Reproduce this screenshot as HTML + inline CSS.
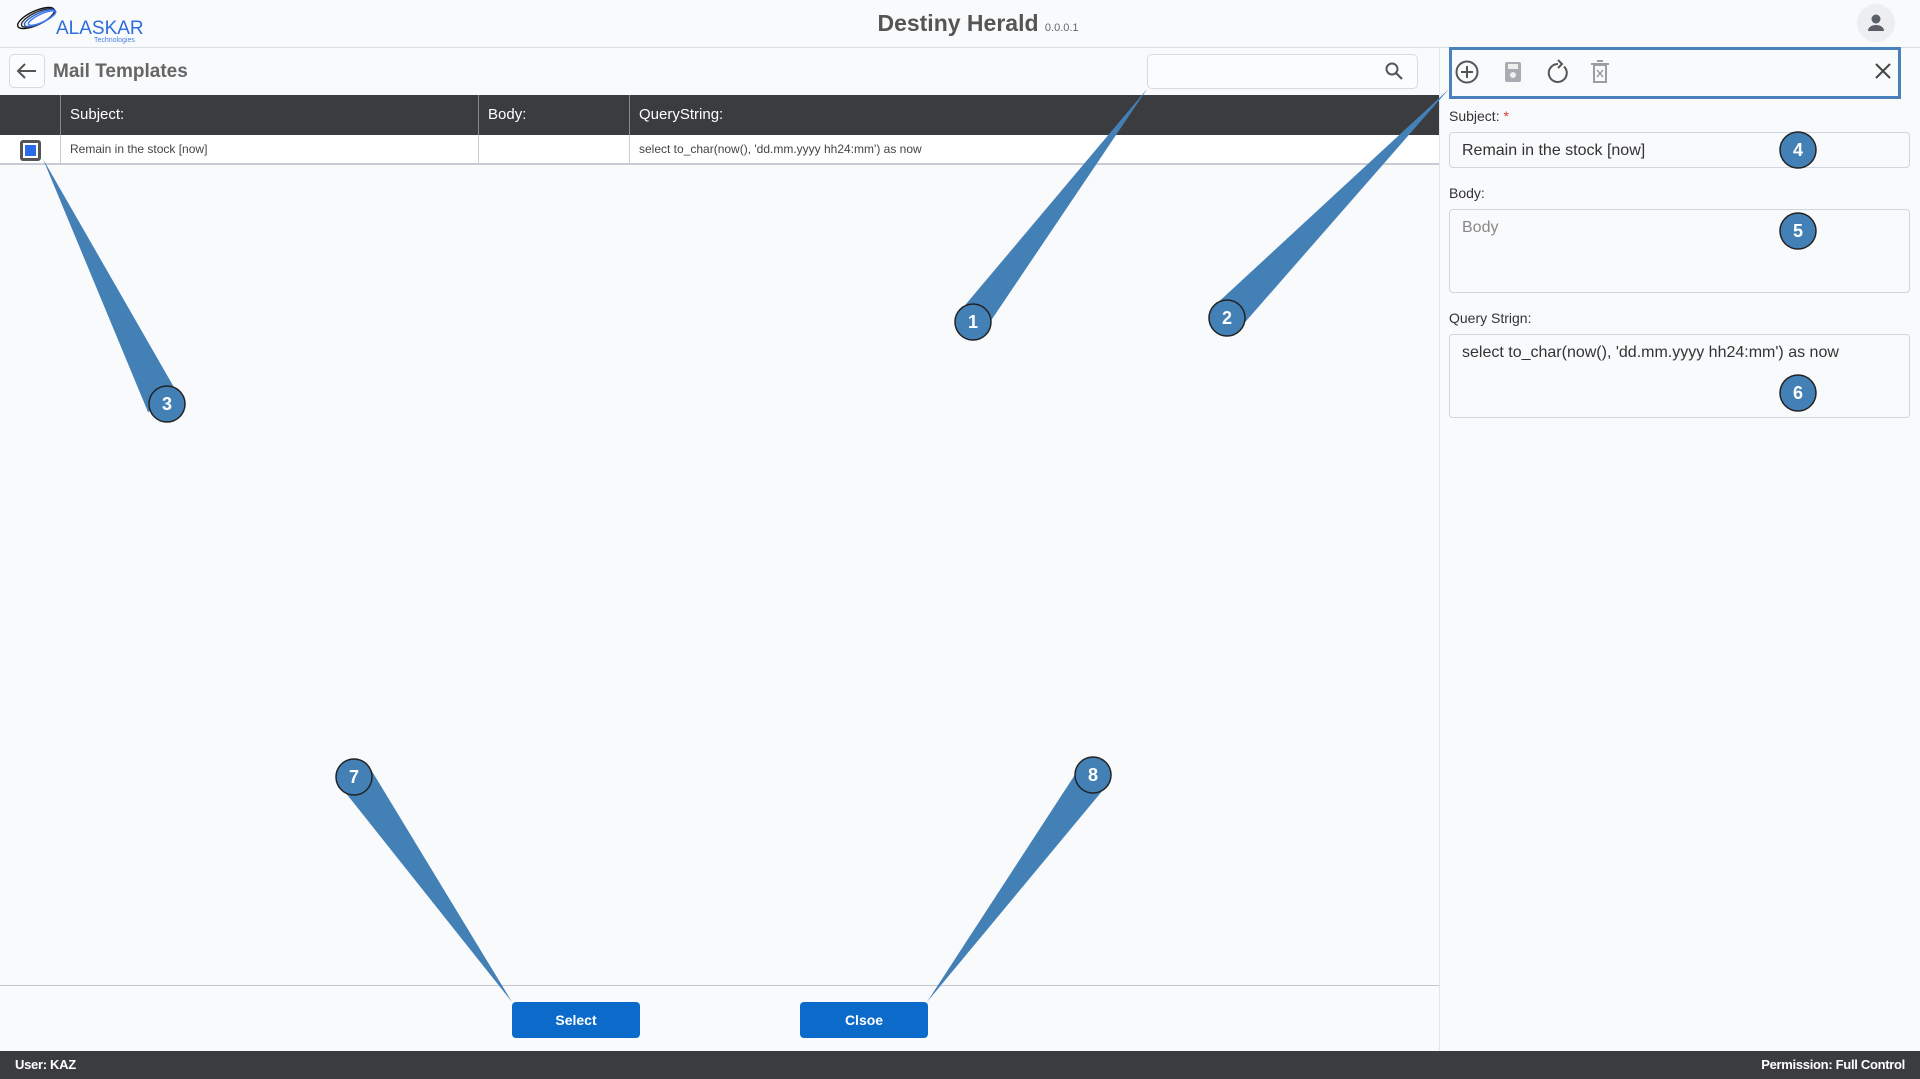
<!DOCTYPE html>
<html><head><meta charset="utf-8"><style>
*{box-sizing:border-box;margin:0;padding:0}
body{width:1920px;height:1079px;overflow:hidden;background:#f9fafc;font-family:"Liberation Sans",sans-serif;position:relative;color:#333}
.abs{position:absolute}
.hdr{left:0;top:0;width:1920px;height:48px;border-bottom:1px solid #dcdfe4;background:#f9fafc}
.title{left:18px;width:1920px;top:10px;text-align:center;font-size:23px;font-weight:bold;color:#555}
.title small{font-size:11px;font-weight:normal;color:#666}
.avatar{left:1857px;top:4px;width:38px;height:38px;border-radius:50%;background:#eceef2}
.back{left:9px;top:54px;width:36px;height:34px;border:1px solid #d6dbe2;border-radius:5px;background:#fbfcfd}
.mt{left:53px;top:61px;font-size:19px;font-weight:bold;color:#666}
.search{left:1147px;top:54px;width:271px;height:35px;border:1px solid #d6dbe2;border-radius:5px;background:#fbfcfd}
.th{left:0;top:95px;width:1439px;height:40px;background:#3b3c40;color:#fff;font-size:15px}
.th div,.tr div{position:absolute;top:0;height:100%;padding-left:9px;line-height:40px;border-left:1px solid #888}
.tr{left:0;top:135px;width:1439px;height:30px;background:#fff;border-bottom:2px solid #c8ccd2;font-size:12px;color:#444}
.tr div{line-height:29px;border-left:1px solid #ccc}
.cb{left:20px;top:140px;width:21px;height:21px;border:3px solid #555;border-radius:3px;background:#2b6be8;box-shadow:inset 0 0 0 2px #fff}
.rp{left:1439px;top:48px;width:481px;height:1003px;border-left:1px solid #e2e5ea;background:#f9fafc}
.tb{left:1449px;top:47px;width:452px;height:52px;border:3px solid #4a80bb}
.lbl{font-size:14px;color:#333}
.inp{left:1449px;width:461px;border:1px solid #d0d6de;border-radius:4px;background:#f9fafc;font-size:16px;color:#333;padding:9px 12px}
.line{left:0;top:985px;width:1439px;height:1px;background:#c4c6ca}
.btn{top:1002px;width:128px;height:36px;background:#0c6bca;border-radius:4px;color:#fff;font-weight:bold;font-size:14px;text-align:center;line-height:36px}
.ft{left:0;top:1051px;width:1920px;height:28px;background:#3b3c40;color:#fff;font-size:13px;font-weight:bold;line-height:28px;letter-spacing:-0.3px}
</style></head><body>
<div class="abs hdr"></div>
<svg class="abs" style="left:14px;top:4px" width="136" height="40" viewBox="0 0 136 40">
<g fill="none" stroke-width="1.4">
<ellipse cx="22" cy="14" rx="20" ry="7" transform="rotate(-25 22 14)" stroke="#111"/>
<ellipse cx="24" cy="14" rx="18" ry="6" transform="rotate(-25 24 14)" stroke="#333"/>
<ellipse cx="26" cy="14" rx="17" ry="5" transform="rotate(-25 26 14)" stroke="#2b5fd0"/>
<ellipse cx="28" cy="14" rx="15" ry="4" transform="rotate(-25 28 14)" stroke="#3a7af0"/>
</g>
<text x="42" y="30" font-family="Liberation Sans" font-size="19" fill="#2d6be0">ALASKAR</text>
<text x="80" y="38" font-family="Liberation Sans" font-size="7" fill="#4a7fe0">Technologies</text>
</svg>
<div class="abs title">Destiny Herald <small>0.0.0.1</small></div>
<div class="abs avatar"><svg width="38" height="38" viewBox="0 0 38 38"><circle cx="19" cy="15" r="4.5" fill="#5a5f68"/><path d="M11 27c0-4 4-6 8-6s8 2 8 6z" fill="#5a5f68"/></svg></div>

<div class="abs back"><svg width="34" height="32" viewBox="0 0 34 32"><path d="M26 16H8M15 9l-7 7 7 7" fill="none" stroke="#555" stroke-width="2"/></svg></div>
<div class="abs mt">Mail Templates</div>
<div class="abs search"><svg class="abs" style="left:236px;top:6px" width="20" height="20" viewBox="0 0 20 20"><circle cx="8" cy="8" r="5.5" fill="none" stroke="#555" stroke-width="2"/><path d="M12 12l6 6" stroke="#555" stroke-width="2.2"/></svg></div>

<div class="abs th"><div style="left:0;width:60px;border:none"></div><div style="left:60px;width:418px">Subject:</div><div style="left:478px;width:151px">Body:</div><div style="left:629px;width:810px">QueryString:</div></div>
<div class="abs tr"><div style="left:0;width:60px;border:none"></div><div style="left:60px;width:418px">Remain in the stock [now]</div><div style="left:478px;width:151px"></div><div style="left:629px;width:810px">select to_char(now(), 'dd.mm.yyyy hh24:mm') as now</div></div>
<div class="abs cb"></div>

<div class="abs rp"></div>
<div class="abs tb">
<svg class="abs" style="left:2px;top:8px" width="300" height="28" viewBox="0 0 300 28">
<circle cx="13" cy="14" r="10.5" fill="none" stroke="#555" stroke-width="2"/><path d="M13 8v12M7 14h12" stroke="#555" stroke-width="2"/>
<rect x="51" y="4" width="16" height="20" rx="2" fill="#a8acb2"/><rect x="54" y="6" width="10" height="5" fill="#eee"/><circle cx="59" cy="17" r="3" fill="#eee"/>
<path d="M104 6a9 9 0 1 0 6 2.5" fill="none" stroke="#555" stroke-width="2"/><path d="M104 2l4 4-4 4" fill="none" stroke="#555" stroke-width="2"/>
<rect x="140" y="7" width="12" height="17" fill="none" stroke="#9a9ea4" stroke-width="2"/><path d="M137 6h18M143 3h6" stroke="#9a9ea4" stroke-width="2"/><path d="M143 12l6 7M149 12l-6 7" stroke="#9a9ea4" stroke-width="1.5"/>
</svg>
<svg class="abs" style="left:421px;top:11px" width="20" height="20" viewBox="0 0 20 20"><path d="M3 3l14 14M17 3L3 17" stroke="#444" stroke-width="2"/></svg>
</div>
<div class="abs lbl" style="left:1449px;top:108px">Subject: <span style="color:#d33">*</span></div>
<div class="abs inp" style="top:132px;height:36px">Remain in the stock [now]</div>
<div class="abs lbl" style="left:1449px;top:185px">Body:</div>
<div class="abs inp" style="top:209px;height:84px;color:#888">Body</div>
<div class="abs lbl" style="left:1449px;top:310px">Query Strign:</div>
<div class="abs inp" style="top:334px;height:84px">select to_char(now(), 'dd.mm.yyyy hh24:mm') as now</div>

<div class="abs line"></div>
<div class="abs btn" style="left:512px">Select</div>
<div class="abs btn" style="left:800px">Clsoe</div>

<div class="abs ft"><span style="position:absolute;left:15px">User: KAZ</span><span style="position:absolute;right:15px">Permission: Full Control</span></div>

<svg class="abs" style="left:0;top:0" width="1920" height="1079" viewBox="0 0 1920 1079">
<g fill="#4380b6">
<polygon points="1147,89 961,310 986,328"/>
<polygon points="1449,89 1212,308 1240,328"/>
<polygon points="43,159 148,412 179,396"/>
<polygon points="512,1002 341,787 370,768"/>
<polygon points="927,1002 1080,767 1108,784"/>
</g>
<g fill="#4380b6" stroke="#222" stroke-width="1.5">
<circle cx="973" cy="322" r="18"/><circle cx="1227" cy="318" r="18"/><circle cx="167" cy="404" r="18"/>
<circle cx="1798" cy="150" r="18"/><circle cx="1798" cy="231" r="18"/><circle cx="1798" cy="393" r="18"/>
<circle cx="354" cy="777" r="18"/><circle cx="1093" cy="775" r="18"/>
</g>
<g fill="#fff" font-family="Liberation Sans" font-weight="bold" font-size="18" text-anchor="middle">
<text x="973" y="328">1</text><text x="1227" y="324">2</text><text x="167" y="410">3</text>
<text x="1798" y="156">4</text><text x="1798" y="237">5</text><text x="1798" y="399">6</text>
<text x="354" y="783">7</text><text x="1093" y="781">8</text>
</g>
</svg>
</body></html>
